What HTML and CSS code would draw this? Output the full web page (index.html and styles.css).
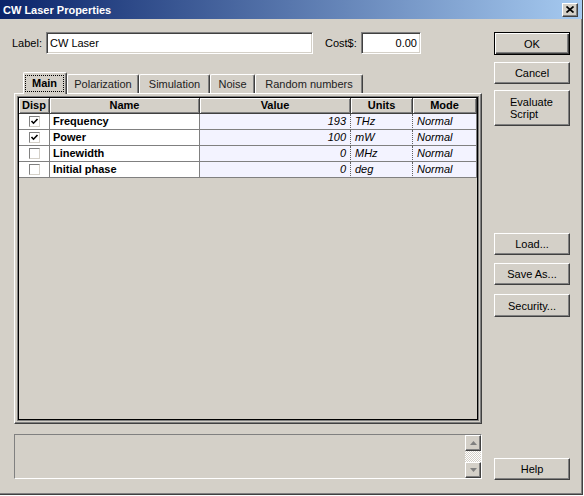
FILE: index.html
```html
<!DOCTYPE html>
<html>
<head>
    <meta charset="utf-8">
    <title>CW Laser Properties</title>
    <link rel="stylesheet" href="styles.css">
</head>
<body>
    <div class="window">
        <div class="titlebar">
            <span class="title">CW Laser Properties</span>
            <span class="close_btn">
                <svg width="8" height="7" viewBox="0 0 8 7"><path d="M0.5 0.5 L7.5 6.5 M7.5 0.5 L0.5 6.5" stroke="#000" stroke-width="1.7" fill="none"/></svg>
            </span>
        </div>

        <div class="dialog">
            <div class="main_col">
                <div class="label_row">
                    <span class="lbl">Label:</span>
                    <div class="field field_label">CW Laser</div>
                    <span class="lbl lbl_cost">Cost$:</span>
                    <div class="field field_cost">0.00</div>
                </div>

                <div class="tabs">
                    <div class="tab tab_active"><span class="focus">Main</span></div>
                    <div class="tab tab_pol">Polarization</div>
                    <div class="tab tab_sim">Simulation</div>
                    <div class="tab tab_noise">Noise</div>
                    <div class="tab tab_rand">Random numbers</div>
                </div>

                <div class="panel">
                    <div class="grid">
                        <div class="grid_row grid_head">
                            <div class="hcell">Disp</div>
                            <div class="hcell">Name</div>
                            <div class="hcell">Value</div>
                            <div class="hcell">Units</div>
                            <div class="hcell">Mode</div>
                        </div>

                        <div class="grid_row">
                            <div class="cell c_disp"><span class="chk"><svg width="9" height="9" viewBox="0 0 9 9"><path d="M1.5 4 L3.5 6.2 L7.5 2" stroke="#000" stroke-width="1.6" fill="none"/></svg></span></div>
                            <div class="cell c_name">Frequency</div>
                            <div class="cell c_val">193</div>
                            <div class="cell c_unit">THz</div>
                            <div class="cell c_mode">Normal</div>
                        </div>
                        <div class="grid_row">
                            <div class="cell c_disp"><span class="chk"><svg width="9" height="9" viewBox="0 0 9 9"><path d="M1.5 4 L3.5 6.2 L7.5 2" stroke="#000" stroke-width="1.6" fill="none"/></svg></span></div>
                            <div class="cell c_name">Power</div>
                            <div class="cell c_val">100</div>
                            <div class="cell c_unit">mW</div>
                            <div class="cell c_mode">Normal</div>
                        </div>
                        <div class="grid_row">
                            <div class="cell c_disp"><span class="chk"></span></div>
                            <div class="cell c_name">Linewidth</div>
                            <div class="cell c_val">0</div>
                            <div class="cell c_unit">MHz</div>
                            <div class="cell c_mode">Normal</div>
                        </div>
                        <div class="grid_row">
                            <div class="cell c_disp"><span class="chk"></span></div>
                            <div class="cell c_name">Initial phase</div>
                            <div class="cell c_val">0</div>
                            <div class="cell c_unit">deg</div>
                            <div class="cell c_mode">Normal</div>
                        </div>
                    </div>
                </div>

                <div class="message">
                    <div class="scrollbar">
                        <div class="sb_btn">
                            <svg width="7" height="4" viewBox="0 0 7 4"><path d="M0 4 L3.5 0 L7 4 Z" fill="#808080"/></svg>
                        </div>
                        <div class="sb_track"></div>
                        <div class="sb_btn">
                            <svg width="7" height="4" viewBox="0 0 7 4"><path d="M0 0 L7 0 L3.5 4 Z" fill="#808080"/></svg>
                        </div>
                    </div>
                </div>
            </div>

            <div class="side_col">
                <div class="btn btn_default btn_ok">OK</div>
                <div class="btn btn_cancel">Cancel</div>
                <div class="btn btn_eval">Evaluate<br>Script</div>
                <div class="btn btn_load">Load...</div>
                <div class="btn btn_save">Save As...</div>
                <div class="btn btn_security">Security...</div>
                <div class="btn btn_help">Help</div>
            </div>
        </div>
    </div>
</body>
</html>
```

FILE: styles.css
```css
body {
    margin:0;
    background:#fff;
    font-family:"Liberation Sans", Arial, sans-serif;
    font-size:11px;
    color:#000;
}

.window {
    width:583px;
    height:495px;
    box-sizing:border-box;
    background:#D4D0C8;
    border-right:1px solid #404040;
    border-bottom:1px solid #404040;
    box-shadow:inset -1px -1px #808080;
}

/* title bar */
.titlebar {
    height:19px;
    display:flex;
    align-items:center;
    justify-content:space-between;
    padding:0 4px 0 3px;
    background:linear-gradient(to right, #0A246A, #A6CAF0);
}
.titlebar .title {
    color:#fff;
    font-weight:bold;
    font-size:11px;
}
.close_btn {
    width:16px;
    height:14px;
    box-sizing:border-box;
    display:flex;
    align-items:center;
    justify-content:center;
    background:#D4D0C8;
    border-top:1px solid #fff;
    border-left:1px solid #fff;
    border-right:1px solid #404040;
    border-bottom:1px solid #404040;
    box-shadow:inset -1px -1px #808080;
}

.dialog {
    display:flex;
    padding:13px 0 0 12px;
}

.main_col {
    width:471px;
}

/* label / cost row */
.label_row {
    display:flex;
    align-items:center;
    height:22px;
}
.lbl {
    width:34px;
}
.lbl_cost {
    width:36px;
    margin-left:12px;
}
.field {
    height:22px;
    box-sizing:border-box;
    background:#fff;
    border-top:1px solid #808080;
    border-left:1px solid #808080;
    border-right:1px solid #fff;
    border-bottom:1px solid #fff;
    box-shadow:inset 1px 1px #404040, inset -1px -1px #D4D0C8;
    padding:0 3px;
    line-height:20px;
    white-space:nowrap;
}
.field_label {
    width:267px;
}
.field_cost {
    width:60px;
    text-align:right;
}

/* tabs */
.tabs {
    display:flex;
    align-items:flex-end;
    margin:18px 0 -1px 11px;
}
.tab {
    height:19px;
    box-sizing:border-box;
    margin-bottom:1px;
    background:#D4D0C8;
    border-top:1px solid #fff;
    border-left:1px solid #fff;
    border-right:1px solid #404040;
    border-radius:2px 2px 0 0;
    box-shadow:inset -1px 0 #808080;
    text-align:center;
    line-height:18px;
    color:#222;
}
.tab_active {
    position:relative;
    z-index:1;
    width:44px;
    height:22px;
    margin-bottom:0;
    font-weight:bold;
    color:#000;
}
.tab_active .focus {
    display:block;
    height:17px;
    box-sizing:border-box;
    margin:2px 2px 0 1px;
    border:1px dotted #000;
    line-height:15px;
}
.tab_pol { width:72px; }
.tab_sim { width:71px; }
.tab_noise { width:45px; }
.tab_rand { width:108px; }

/* tab panel + grid */
.panel {
    width:468px;
    height:331px;
    box-sizing:border-box;
    margin-left:2px;
    padding:3px;
    border-top:1px solid #fff;
    border-left:1px solid #fff;
    border-right:1px solid #404040;
    border-bottom:1px solid #404040;
    box-shadow:inset -1px -1px #808080;
}
.grid {
    height:323px;
    box-sizing:border-box;
    border:1px solid #000;
    box-shadow:0 0 0 1px #808080;
}
.grid_row {
    display:grid;
    grid-template-columns:31px 150px 151px 62px 64px;
    height:16px;
}
.hcell {
    box-sizing:border-box;
    background:#D4D0C8;
    border-right:1px solid #404040;
    border-bottom:1px solid #404040;
    box-shadow:inset 1px 1px #fff, inset -1px -1px #808080;
    font-weight:bold;
    text-align:center;
    line-height:15px;
}
.cell {
    box-sizing:border-box;
    border-right:1px solid #808080;
    border-bottom:1px solid #808080;
    background:#fff;
    line-height:15px;
    white-space:nowrap;
    overflow:hidden;
}
.c_disp {
    display:flex;
    align-items:center;
    justify-content:center;
}
.c_name {
    font-weight:bold;
    padding-left:3px;
}
.c_val, .c_unit, .c_mode {
    background:#F3F3FF;
    font-style:italic;
}
.c_val {
    text-align:right;
    padding-right:4px;
    border-right:1px dotted #606060;
}
.c_unit {
    padding-left:4px;
    border-right:1px dotted #606060;
}
.c_mode {
    padding-left:4px;
}
.chk {
    width:11px;
    height:11px;
    box-sizing:border-box;
    display:flex;
    align-items:center;
    justify-content:center;
    background:#fff;
    border-top:1px solid #808080;
    border-left:1px solid #808080;
    border-right:1px solid #D4D0C8;
    border-bottom:1px solid #D4D0C8;
}

/* bottom message box */
.message {
    width:468px;
    height:45px;
    box-sizing:border-box;
    margin:10px 0 0 2px;
    border-top:1px solid #808080;
    border-left:1px solid #808080;
    border-right:1px solid #fff;
    border-bottom:1px solid #fff;
    display:flex;
    justify-content:flex-end;
}
.scrollbar {
    width:16px;
    display:flex;
    flex-direction:column;
}
.sb_btn {
    height:16px;
    box-sizing:border-box;
    display:flex;
    align-items:center;
    justify-content:center;
    background:#D4D0C8;
    border-top:1px solid #fff;
    border-left:1px solid #fff;
    border-right:1px solid #404040;
    border-bottom:1px solid #404040;
    box-shadow:inset -1px -1px #808080;
}
.sb_track {
    flex:1;
    background:repeating-conic-gradient(#fff 0 25%, #D4D0C8 0 50%) 0 0 / 2px 2px;
}

/* right hand buttons */
.side_col {
    display:flex;
    flex-direction:column;
    width:76px;
    margin-left:11px;
}
.btn {
    height:22px;
    box-sizing:border-box;
    display:flex;
    align-items:center;
    justify-content:center;
    background:#D4D0C8;
    border-top:1px solid #fff;
    border-left:1px solid #fff;
    border-right:1px solid #404040;
    border-bottom:1px solid #404040;
    box-shadow:inset -1px -1px #808080;
}
.btn_default {
    height:23px;
    border:1px solid #000;
    box-shadow:inset 1px 1px #fff, inset -1px -1px #404040, inset -2px -2px #808080;
}
.btn_cancel { margin-top:7px; }
.btn_eval {
    height:36px;
    margin-top:6px;
    justify-content:flex-start;
    padding-left:15px;
    line-height:12px;
}
.btn_load { margin-top:107px; }
.btn_save { margin-top:8px; }
.btn_security { margin-top:9px; height:23px; }
.btn_help { margin-top:141px; }
```
